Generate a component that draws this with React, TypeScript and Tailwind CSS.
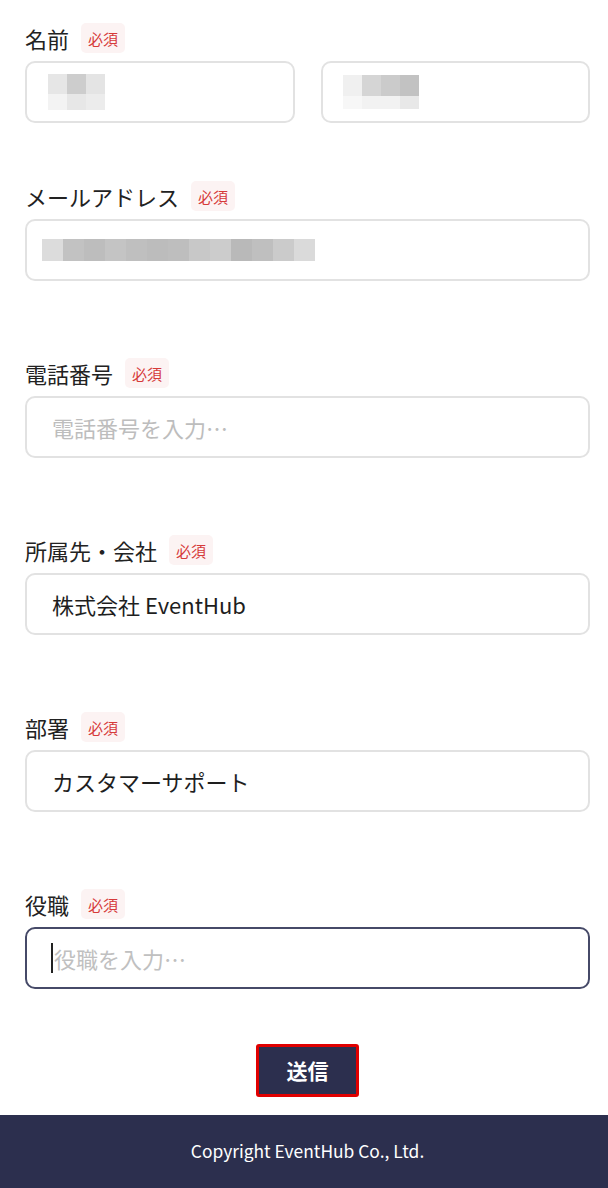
import React from "react";

const font = { fontFamily: '"Noto Sans CJK JP", "Noto Sans", sans-serif' };

function Badge() {
  return (
    <span className="ml-[12px] inline-flex h-[30px] items-center rounded-[5px] bg-[#fcf3f3] px-[7px] text-[15px] leading-none text-[#d63a3a]">
      必須
    </span>
  );
}

function Label({ text }: { text: string }) {
  return (
    <div className="flex h-[30px] items-center">
      <span className="text-[22px] leading-none text-[#222]">{text}</span>
      <Badge />
    </div>
  );
}

function Mosaic({ cells, cw, ch }: { cells: string[][]; cw: number; ch: number[] }) {
  return (
    <div className="flex flex-col">
      {cells.map((row, i) => (
        <div key={i} className="flex">
          {row.map((c, j) => (
            <div key={j} style={{ width: cw, height: ch[i], background: c }} />
          ))}
        </div>
      ))}
    </div>
  );
}

function Box({ children, focused, pad = "pl-[25px]" }: { children?: React.ReactNode; focused?: boolean; pad?: string }) {
  return (
    <div
      className={
        "flex h-[62px] items-center rounded-[10px] bg-white " +
        (focused ? "border-[2.5px] border-[#464a68] " : "border-2 border-[#e2e2e2] ") +
        pad
      }
    >
      {children}
    </div>
  );
}

export default function App() {
  return (
    <div className="flex h-[1188px] w-full flex-col overflow-hidden bg-white" style={font}>
      <div className="pl-[25px] pr-[18px] pt-[23px]">
        {/* 名前 */}
        <Label text="名前" />
        <div className="mt-[8px] grid grid-cols-2 gap-[26px]">
          <Box pad="pl-[21px]">
            <Mosaic
              cw={19}
              ch={[20, 16]}
              cells={[
                ["#e6e6e6", "#cdcdcd", "#e4e4e4"],
                ["#f3f3f3", "#e7e7e7", "#ececec"],
              ]}
            />
          </Box>
          <Box pad="pl-[20px]">
            <Mosaic
              cw={19}
              ch={[21, 13]}
              cells={[
                ["#f0f0f0", "#d5d5d5", "#cbcbcb", "#c2c2c2"],
                ["#f7f7f7", "#f2f2f2", "#f2f2f2", "#e8e8e8"],
              ]}
            />
          </Box>
        </div>

        {/* メールアドレス */}
        <div className="mt-[58px]">
          <Label text="メールアドレス" />
          <div className="mt-[8px]">
            <Box pad="pl-[15px]">
              <Mosaic
                cw={21}
                ch={[22]}
                cells={[
                  [
                    "#dcdcdc",
                    "#c2c2c2",
                    "#bdbdbd",
                    "#c4c4c4",
                    "#bfbfbf",
                    "#bcbcbc",
                    "#bebebe",
                    "#c8c8c8",
                    "#cccccc",
                    "#b9b9b9",
                    "#bfbfbf",
                    "#cbcbcb",
                    "#dadada",
                  ],
                ]}
              />
            </Box>
          </div>
        </div>

        {/* 電話番号 */}
        <div className="mt-[77px]">
          <Label text="電話番号" />
          <div className="mt-[8px]">
            <Box>
              <span className="text-[22px] text-[#bdbdbd]">電話番号を入力…</span>
            </Box>
          </div>
        </div>

        {/* 所属先・会社 */}
        <div className="mt-[77px]">
          <Label text="所属先・会社" />
          <div className="mt-[8px]">
            <Box>
              <span className="text-[22px] text-[#1e1e1e]">株式会社 EventHub</span>
            </Box>
          </div>
        </div>

        {/* 部署 */}
        <div className="mt-[77px]">
          <Label text="部署" />
          <div className="mt-[8px]">
            <Box>
              <span className="text-[22px] text-[#1e1e1e]">カスタマーサポート</span>
            </Box>
          </div>
        </div>

        {/* 役職 */}
        <div className="mt-[77px]">
          <Label text="役職" />
          <div className="mt-[8px]">
            <Box focused pad="pl-[24px]">
              <span className="mr-[1px] h-[30px] w-[2px] bg-[#222]" />
              <span className="text-[22px] text-[#c0c0c0]">役職を入力…</span>
            </Box>
          </div>
        </div>

        {/* 送信 */}
        <div className="mt-[55px] flex justify-center">
          <button className="flex h-[53px] w-[103px] items-center justify-center rounded-[3px] border-[3px] border-[#e00000] bg-[#2c2f4e] text-[21px] font-bold text-white">
            送信
          </button>
        </div>
      </div>

      <footer className="mt-auto flex h-[73px] items-center justify-center bg-[#2c2f4e] pl-[25px] pr-[18px]">
        <span className="text-[17.4px] text-white">Copyright EventHub Co., Ltd.</span>
      </footer>
    </div>
  );
}
